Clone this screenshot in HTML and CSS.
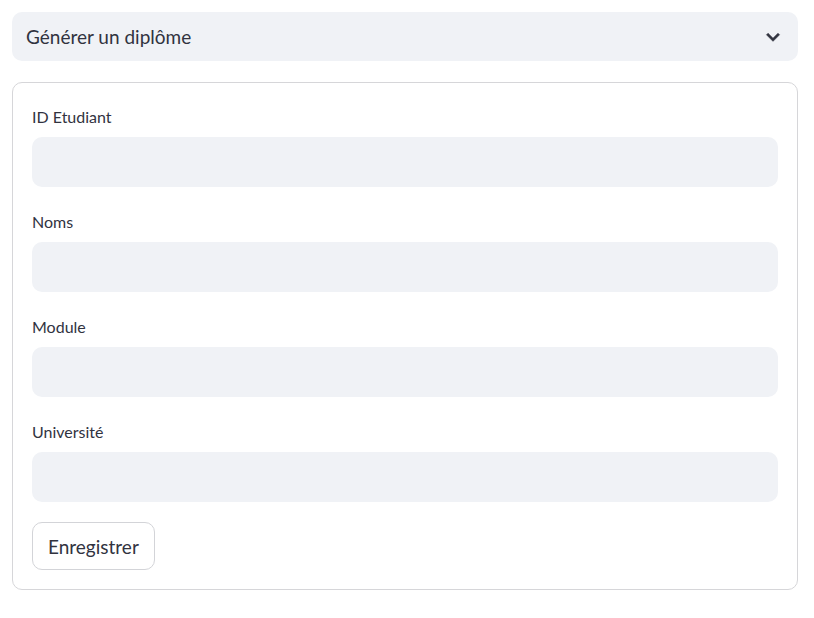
FILE: index.html
```html
<!DOCTYPE html>
<html lang="fr">
<head>
<meta charset="utf-8">
<link rel="stylesheet" href="styles.css">
</head>
<body>
<div class="page">
  <div class="expander">
    <span class="exp-title">Générer un diplôme</span>
    <svg class="chev" width="26" height="26" viewBox="0 0 24 24"><path d="M16.59 8.59 12 13.17 7.41 8.59 6 10l6 6 6-6z" fill="#31333f" stroke="#31333f" stroke-width="0.6"/></svg>
  </div>
  <form class="form">
    <div class="field">
      <label class="label">ID Etudiant</label>
      <div class="input"></div>
    </div>
    <div class="field">
      <label class="label">Noms</label>
      <div class="input"></div>
    </div>
    <div class="field">
      <label class="label">Module</label>
      <div class="input"></div>
    </div>
    <div class="field">
      <label class="label">Université</label>
      <div class="input"></div>
    </div>
    <div class="actions">
      <button type="button" class="btn">Enregistrer</button>
    </div>
  </form>
</div>
</body>
</html>
```
FILE: styles.css
```css
* { box-sizing: border-box; }
html, body { margin: 0; padding: 0; background: #fff; }
body {
  font-family: Lato, "Liberation Sans", sans-serif;
  color: #31333f;
}
.page {
  padding: 12px 16px 0 12px;
  display: flex;
  flex-direction: column;
  gap: 21px;
}
.expander {
  height: 49px;
  background: #f0f2f6;
  border-radius: 10px;
  display: flex;
  align-items: center;
  justify-content: space-between;
  padding: 0 12px 0 14px;
}
.exp-title {
  font-size: 19px;
}
.chev { display: block; }
.form {
  border: 1px solid #d6d6d9;
  border-radius: 10px;
  padding: 19px;
  height: 508px;
  display: flex;
  flex-direction: column;
}
.field {
  display: flex;
  flex-direction: column;
  margin-bottom: 20px;
}
.label {
  font-size: 16px;
  line-height: 20px;
  margin-top: 5px;
  margin-bottom: 10px;
}
.input {
  height: 50px;
  background: #f0f2f6;
  border-radius: 10px;
}
.actions { margin-top: 0; }
.btn {
  height: 48px;
  padding: 0 15px;
  border: 1px solid #d3d4d8;
  border-radius: 10px;
  background: #fff;
  font-family: inherit;
  font-size: 19px;
  color: #31333f;
}
```
